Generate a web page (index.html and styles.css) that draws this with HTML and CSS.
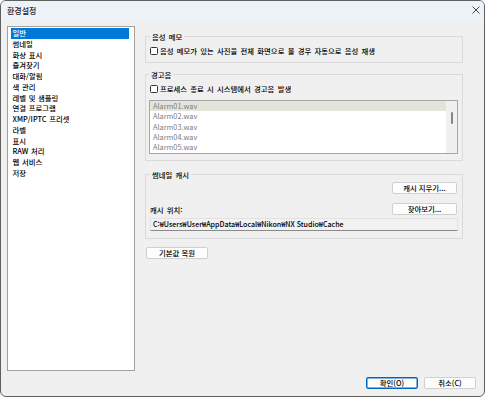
FILE: index.html
```html
<!DOCTYPE html>
<html lang="ko">
<head>
<meta charset="utf-8">
<title>환경설정</title>
<link rel="stylesheet" href="styles.css">
</head>
<body>
<div class="window">
  <div class="titlebar">
    <span class="title">환경설정</span>
    <svg class="close" width="8" height="8" viewBox="0 0 8 8"><path d="M0.5 0.5L7.5 7.5M7.5 0.5L0.5 7.5" stroke="#333" stroke-width="0.9" fill="none"/></svg>
  </div>
  <div class="main">
    <ul class="nav">
      <li class="sel">일반</li>
      <li>썸네일</li>
      <li>화상 표시</li>
      <li>즐겨찾기</li>
      <li>대화/알림</li>
      <li>색 관리</li>
      <li>레벨 및 샘플링</li>
      <li>연결 프로그램</li>
      <li>XMP/IPTC 프리셋</li>
      <li>라벨</li>
      <li>표시</li>
      <li>RAW 처리</li>
      <li>웹 서비스</li>
      <li>저장</li>
    </ul>
    <div class="content">
      <fieldset class="group g1">
        <legend>음성 메모</legend>
        <label class="check"><span class="box"></span>음성 메모가 있는 사진을 전체 화면으로 볼 경우 자동으로 음성 재생</label>
      </fieldset>
      <fieldset class="group g2">
        <legend>경고음</legend>
        <label class="check"><span class="box"></span>프로세스 종료 시 시스템에서 경고음 발생</label>
        <div class="listbox">
          <ul class="items">
            <li class="hl">Alarm01.wav</li>
            <li>Alarm02.wav</li>
            <li>Alarm03.wav</li>
            <li>Alarm04.wav</li>
            <li>Alarm05.wav</li>
          </ul>
          <div class="scroll"><span class="thumb"></span></div>
        </div>
      </fieldset>
      <fieldset class="group g3">
        <legend>썸네일 캐시</legend>
        <div class="row end"><button class="btn side">캐시 지우기...</button></div>
        <div class="row between loc"><span>캐시 위치:</span><button class="btn side">찾아보기...</button></div>
        <div class="path">C:₩Users₩User₩AppData₩Local₩Nikon₩NX Studio₩Cache</div>
      </fieldset>
      <button class="btn reset">기본값 복원</button>
    </div>
  </div>
  <div class="footer">
    <button class="btn foot primary">확인(O)</button>
    <button class="btn foot">취소(C)</button>
  </div>
</div>
</body>
</html>
```
FILE: styles.css
```css
* { box-sizing: border-box; }
html, body { margin: 0; padding: 0; background: #ffffff; }
body {
  font-family: "Noto Sans CJK KR", "Liberation Sans", sans-serif;
  font-size: 7.35px;
  font-weight: 500;
  line-height: 11px;
  word-spacing: 1.2px;
  color: #000;
}
.window {
  width: 485px;
  height: 397px;
  border: 1px solid #5f5f5f;
  border-radius: 6px;
  overflow: hidden;
  background: #f0f0f0;
  display: flex;
  flex-direction: column;
}
.titlebar {
  height: 20px;
  flex: none;
  background: #eef3f9;
  display: flex;
  align-items: center;
  justify-content: space-between;
  padding: 0 4px 2px 6px;
}
.title { font-size: 8px; color: #1a1a1a; }
.close { display: block; }
.main {
  display: flex;
  align-items: flex-start;
  padding: 5px 0 0 6px;
}
.nav {
  list-style: none;
  margin: 0;
  width: 128px;
  height: 345px;
  border: 1px solid #a0a0a0;
  background: #fff;
  padding: 1px 5px 0 3px;
}
.nav li {
  height: 10.75px;
  line-height: 10.75px;
  padding-left: 1.5px;
  white-space: nowrap;
  word-spacing: 0.6px;
}
.nav li.sel { background: #0078d7; color: #fff; }
.content {
  width: 318px;
  margin-left: 10px;
  padding-top: 5px;
  display: flex;
  flex-direction: column;
  align-items: flex-start;
}
.group {
  width: 100%;
  margin: 0;
  min-width: 0;
  border: 1px solid #dadada;
  padding: 3px 4px 6px 4px;
}
.group legend {
  padding: 0 2px;
  line-height: 11px;
}
.g2 { margin-top: 6px; padding-left: 3px; }
.g2 .check { margin-left: 1px; }
.g3 { margin-top: 8px; padding: 2px 4px 7px 4px; }
.check {
  display: flex;
  align-items: center;
  gap: 2px;
  height: 11px;
  white-space: nowrap;
}
.box {
  width: 8px;
  height: 8px;
  border: 1px solid #333;
  border-radius: 1.5px;
  background: #fff;
  flex: none;
}
.listbox {
  display: flex;
  height: 54px;
  margin-top: 6px;
  border: 1px solid #a6a6a6;
  background: #fff;
}
.items {
  flex: 1;
  list-style: none;
  margin: 0;
  padding: 0;
  font-weight: 400;
}
.items li {
  height: 10.25px;
  line-height: 10.25px;
  padding-left: 3px;
  color: #7d7d7d;
}
.items li.hl { background: #e4e4da; }
.scroll {
  width: 11px;
  background: #f0f0f0;
  padding-top: 11px;
  display: flex;
  justify-content: center;
  align-items: flex-start;
}
.thumb {
  width: 2px;
  height: 12px;
  background: #858585;
  border-radius: 1px;
}
.row { display: flex; align-items: center; }
.end { justify-content: flex-end; }
.between { justify-content: space-between; }
.loc { margin-top: 9px; }
.btn {
  height: 12px;
  padding: 0;
  border: 1px solid #d0d0d0;
  border-radius: 2px;
  background: #fdfdfd;
  font: inherit;
  line-height: 10px;
  color: #000;
}
.side { width: 65px; margin-right: 1px; }
.path {
  margin-top: 3px;
  height: 13px;
  border: 1px solid #e2e2e2;
  border-bottom-color: #8a8a8a;
  background: #f2f2f2;
  padding-left: 2px;
  font-size: 7.1px;
  line-height: 11px;
  white-space: nowrap;
  overflow: hidden;
  word-spacing: 0;
}
.reset { width: 62px; margin-top: 8px; margin-left: 1px; }
.footer {
  display: flex;
  justify-content: flex-end;
  gap: 6px;
  margin-top: 6px;
  padding-right: 8px;
}
.foot { width: 52px; }
.primary { border-color: #0067c0; box-shadow: inset 0 0 0 0.5px #0067c0; }
```
